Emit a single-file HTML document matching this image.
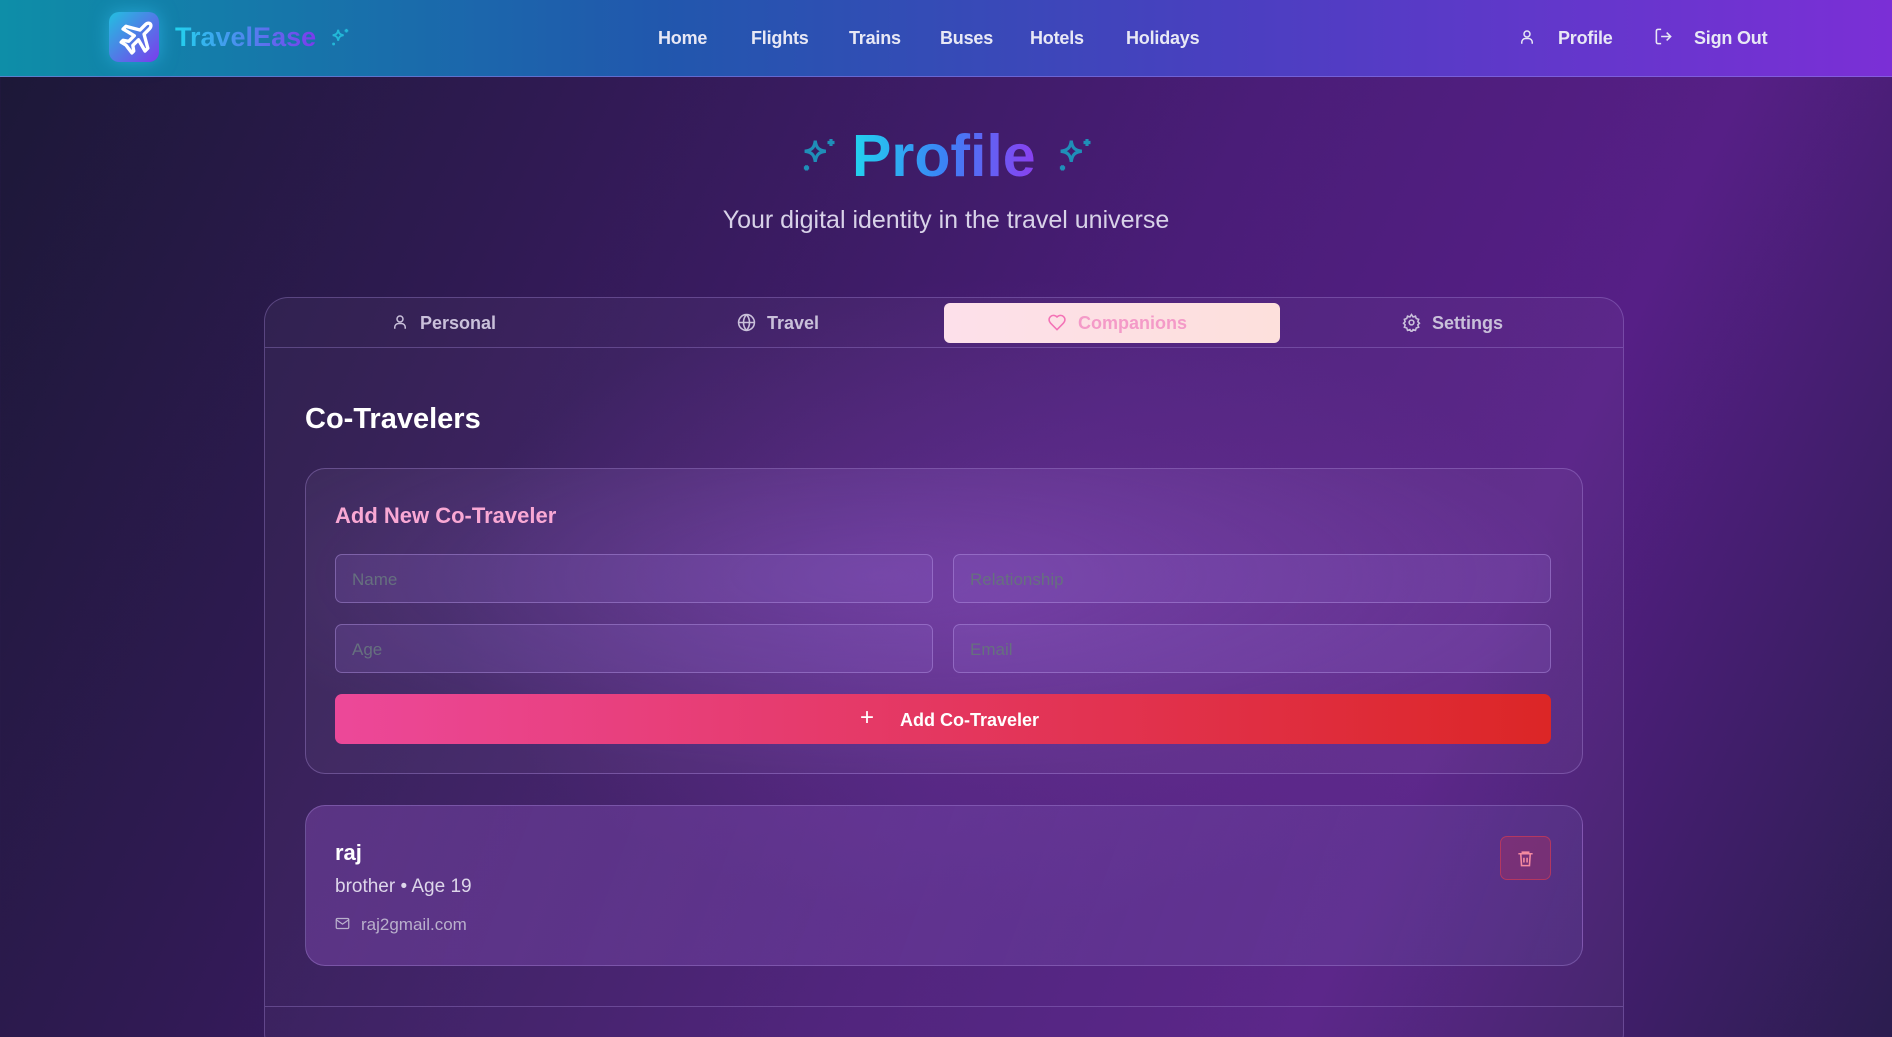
<!DOCTYPE html>
<html><head><meta charset="utf-8"><style>
*{box-sizing:border-box;margin:0;padding:0}
html{overflow:hidden;width:1892px;height:1037px}
body{width:1892px;height:1037px;overflow:hidden;font-family:"Liberation Sans",sans-serif;position:relative;
background:linear-gradient(115deg,#1b1836 0%,#2f1a52 25%,#4a1d78 55%,#561f86 75%,#2b1d4f 100%);}
.glow{position:absolute;left:400px;top:250px;width:1200px;height:700px;background:radial-gradient(ellipse at center,rgba(120,50,170,.4),transparent 65%)}
nav{position:absolute;left:0;top:0;width:1892px;height:77px;background:linear-gradient(90deg,#0e8ea8 0%,#2157ad 35%,#4a3fc0 65%,#7b2fd6 100%);border-bottom:1px solid rgba(140,120,230,.6)}
.logo{position:absolute;left:109px;top:12px;width:50px;height:50px;border-radius:10px;background:linear-gradient(135deg,#22c0e0,#7c3aed);box-shadow:0 0 18px rgba(60,200,255,.5)}
.brand{position:absolute;left:175px;top:22px;font-size:27px;font-weight:bold;background:linear-gradient(90deg,#22d3ee,#7c3aed);-webkit-background-clip:text;color:transparent}
.nl{position:absolute;top:28px;font-size:18px;font-weight:bold;color:#e8e8f5;letter-spacing:-.2px}
.t{position:absolute;color:#fff}
.card{position:absolute;left:264px;top:297px;width:1360px;height:760px;border:1px solid rgba(170,140,220,.35);border-radius:24px;background:rgba(255,255,255,.04)}
.tab{position:absolute;top:313px;font-size:18px;color:#c9c0da;font-weight:bold}
.box{position:absolute;border:1px solid rgba(180,150,230,.35);border-radius:20px;background:rgba(255,255,255,.06)}
.inp{position:absolute;height:49px;width:598px;border:1px solid rgba(190,160,240,.4);border-radius:7px;background:rgba(150,110,210,.18);color:#66707f;font-size:17px;padding:15px 16px}
</style></head><body>
<div class="glow"></div>
<nav>
<div class="logo"><svg width="50" height="50" viewBox="0 0 24 24" fill="none" stroke="#fff" stroke-width="1.8" stroke-linejoin="round"><path d="M7.5 16.5 5 15l1-1 3 .5 3-3-6-3.5 1.5-1.5 7.5 2 3-3c.8-.8 2-.8 2.5-.3s.5 1.7-.3 2.5l-3 3 2 7.5-1.5 1.5-3.5-6-3 3 .5 3-1 1z" transform="translate(0 1) scale(.9) translate(1.5 0)"/></svg></div>
<div class="brand">TravelEase</div>
<svg style="position:absolute;left:329px;top:27px" width="22" height="22" viewBox="0 0 24 24" fill="none" stroke="#22b8d8" stroke-width="2"><path d="M10 3c.5 4 2 5.5 6 6-4 .5-5.5 2-6 6-.5-4-2-5.5-6-6 4-.5 5.5-2 6-6zM19 2v4M17 4h4M5 17v3M3.5 18.5h3"/></svg>
<div class="nl" style="left:658px">Home</div>
<div class="nl" style="left:751px">Flights</div>
<div class="nl" style="left:849px">Trains</div>
<div class="nl" style="left:940px">Buses</div>
<div class="nl" style="left:1030px">Hotels</div>
<div class="nl" style="left:1126px">Holidays</div>
<svg style="position:absolute;left:1518px;top:28px" width="18" height="18" viewBox="0 0 24 24" fill="none" stroke="#e8e8f5" stroke-width="2"><circle cx="12" cy="8" r="4"/><path d="M5 21v-2a5 5 0 0 1 5-5h4a5 5 0 0 1 5 5v2"/></svg>
<div class="nl" style="left:1558px">Profile</div>
<svg style="position:absolute;left:1654px;top:27px" width="19" height="19" viewBox="0 0 24 24" fill="none" stroke="#e8e8f5" stroke-width="2"><path d="M9 21H5a2 2 0 0 1-2-2V5a2 2 0 0 1 2-2h4M16 17l5-5-5-5M21 12H9"/></svg>
<div class="nl" style="left:1694px">Sign Out</div>
</nav>
<svg style="position:absolute;left:796px;top:132px" width="42" height="42" viewBox="0 0 24 24" fill="none" stroke="#1f8fb8" stroke-width="1.8"><path d="M10 3c.5 4 2 5.5 6 6-4 .5-5.5 2-6 6-.5-4-2-5.5-6-6 4-.5 5.5-2 6-6zM19 2v4M17 4h4M5 17v3M3.5 18.5h3" transform="translate(1 2)"/></svg>
<svg style="position:absolute;left:1052px;top:132px" width="42" height="42" viewBox="0 0 24 24" fill="none" stroke="#1f8fb8" stroke-width="1.8"><path d="M10 3c.5 4 2 5.5 6 6-4 .5-5.5 2-6 6-.5-4-2-5.5-6-6 4-.5 5.5-2 6-6zM19 2v4M17 4h4M5 17v3M3.5 18.5h3" transform="translate(1 2)"/></svg>
<div style="position:absolute;left:852px;top:122px;font-size:59px;font-weight:bold;background:linear-gradient(90deg,#22d3ee,#3b82f6,#8b3ff0);-webkit-background-clip:text;color:transparent">Profile</div>
<div class="t" style="left:0;width:1892px;text-align:center;top:206px;font-size:25px;color:#d8d2e8">Your digital identity in the travel universe</div>
<div class="card"></div>
<div style="position:absolute;left:265px;top:347px;width:1358px;height:1px;background:rgba(170,140,220,.35)"></div>
<div style="position:absolute;left:944px;top:303px;width:336px;height:40px;border-radius:6px;background:linear-gradient(90deg,#fde0ea,#fde0dc)"></div>
<svg style="position:absolute;left:391px;top:313px" width="18" height="18" viewBox="0 0 24 24" fill="none" stroke="#c9c0da" stroke-width="2"><circle cx="12" cy="8" r="4"/><path d="M5 21v-2a5 5 0 0 1 5-5h4a5 5 0 0 1 5 5v2"/></svg>
<div class="tab" style="left:420px">Personal</div>
<svg style="position:absolute;left:737px;top:313px" width="19" height="19" viewBox="0 0 24 24" fill="none" stroke="#c9c0da" stroke-width="2"><circle cx="12" cy="12" r="10"/><path d="M2 12h20M12 2a15 15 0 0 1 0 20M12 2a15 15 0 0 0 0 20"/></svg>
<div class="tab" style="left:767px">Travel</div>
<svg style="position:absolute;left:1047px;top:313px" width="20" height="19" viewBox="0 0 24 24" fill="none" stroke="#f472b6" stroke-width="2"><path d="M19 14c1.5-1.5 3-3.2 3-5.5A5.5 5.5 0 0 0 16.5 3c-1.8 0-3 .5-4.5 2-1.5-1.5-2.7-2-4.5-2A5.5 5.5 0 0 0 2 8.5c0 2.3 1.5 4 3 5.5l7 7z"/></svg>
<div class="tab" style="left:1078px;color:#f49ac8">Companions</div>
<svg style="position:absolute;left:1402px;top:313px" width="19" height="19" viewBox="0 0 24 24" fill="none" stroke="#c9c0da" stroke-width="2"><circle cx="12" cy="12" r="3"/><path d="M12 2l2 3 3-1 1 3 3 1-1 3 2 2-2 2 1 3-3 1-1 3-3-1-2 3-2-3-3 1-1-3-3-1 1-3-2-2 2-2-1-3 3-1 1-3 3 1z"/></svg>
<div class="tab" style="left:1432px">Settings</div>
<div class="t" style="left:305px;top:403px;font-size:29px;font-weight:bold">Co-Travelers</div>
<div class="box" style="left:305px;top:468px;width:1278px;height:306px;background:radial-gradient(ellipse at 45% 35%,rgba(160,110,220,.3),rgba(255,255,255,.04) 70%)"></div>
<div class="t" style="left:335px;top:503px;font-size:22px;font-weight:bold;color:#f9a8d4">Add New Co-Traveler</div>
<div class="inp" style="left:335px;top:554px">Name</div>
<div class="inp" style="left:953px;top:554px">Relationship</div>
<div class="inp" style="left:335px;top:624px">Age</div>
<div class="inp" style="left:953px;top:624px">Email</div>
<div style="position:absolute;left:335px;top:694px;width:1216px;height:50px;border-radius:7px;background:linear-gradient(90deg,#ec4899,#dc2626)"></div>
<div class="t" style="left:860px;top:704px;font-size:24px">+</div>
<div class="t" style="left:900px;top:710px;font-size:18px;font-weight:bold">Add Co-Traveler</div>
<div class="box" style="left:305px;top:805px;width:1278px;height:161px;background:linear-gradient(110deg,rgba(140,80,190,.4),rgba(100,80,160,.25))"></div>
<div class="t" style="left:335px;top:840px;font-size:22px;font-weight:bold">raj</div>
<div class="t" style="left:335px;top:876px;font-size:19px;color:#ddd6ea">brother • Age 19</div>
<svg style="position:absolute;left:335px;top:917px" width="15" height="13" viewBox="0 0 24 20" fill="none" stroke="#b9b0cc" stroke-width="2"><rect x="2" y="2" width="20" height="16" rx="2"/><path d="M2 4l10 7 10-7"/></svg>
<div class="t" style="left:361px;top:915px;font-size:17px;color:#b9b0cc">raj2gmail.com</div>
<div style="position:absolute;left:1500px;top:836px;width:51px;height:44px;border:1px solid rgba(220,60,80,.6);border-radius:7px;background:rgba(180,50,90,.35)"></div>
<svg style="position:absolute;left:1516px;top:849px" width="19" height="19" viewBox="0 0 24 24" fill="none" stroke="#f48aa0" stroke-width="2"><path d="M3 6h18M8 6V4h8v2M6 6l1 15h10l1-15M10 11v6M14 11v6"/></svg>
<div style="position:absolute;left:265px;top:1006px;width:1358px;height:1px;background:rgba(170,140,220,.35)"></div>
</body></html>
